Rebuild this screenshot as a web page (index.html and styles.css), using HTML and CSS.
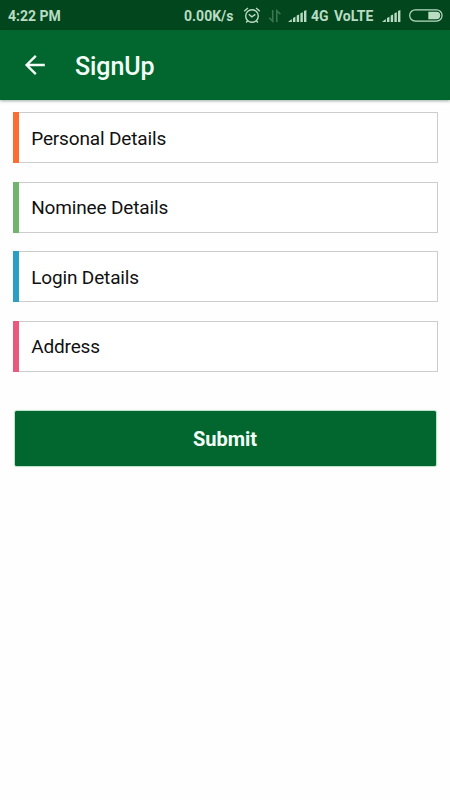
FILE: index.html
```html
<!DOCTYPE html>
<html lang="en">
<head>
<meta charset="utf-8">
<title>SignUp</title>
<link rel="stylesheet" href="styles.css">
</head>
<body>
<div class="status">
  <span class="time">4:22 PM</span>
  <span class="speed">0.00K/s</span>
  <svg class="alarm" width="18" height="18" viewBox="0 0 18 18" fill="none" stroke="currentColor" stroke-width="1.4"><circle cx="9" cy="9" r="6.3"/><path d="M1.2 4.2 4.9 1M16.8 4.2 13.1 1M5.8 7.2 8.8 9.8 12.4 7.4M4.6 13.7 3.2 15.5M13.4 13.7 14.8 15.5"/></svg>
  <svg class="data" width="14" height="14" viewBox="0 0 14 14" fill="none" stroke="currentColor" stroke-width="1.6"><path d="M4.7 1V12.3L1.2 8.7M8.8 13V1.7L12.4 5.3"/></svg>
  <svg class="signal" width="19" height="14" viewBox="0 0 19 14" fill="currentColor"><path d="M0 13 3.8 10V13ZM5 8.9 7.4 7.8V13H5ZM8.7 6.6 11.1 5.5V13H8.7ZM12.4 4.3 14.8 3.2V13H12.4ZM16 2 18.4 1V13H16Z"/></svg>
  <span class="network">4G</span>
  <span class="volte">VoLTE</span>
  <svg class="signal second" width="19" height="14" viewBox="0 0 19 14" fill="currentColor"><path d="M0 13 3.8 10V13ZM5 8.9 7.4 7.8V13H5ZM8.7 6.6 11.1 5.5V13H8.7ZM12.4 4.3 14.8 3.2V13H12.4ZM16 2 18.4 1V13H16Z"/></svg>
  <svg class="battery" width="34" height="13" viewBox="0 0 34 13"><rect x=".7" y=".9" width="32.4" height="11.2" rx="5.6" fill="none" stroke="currentColor" stroke-width="1.2"/><path d="M19.3 2.8H27.5A3.7 3.7 0 0 1 27.5 10.2H19.3Z" fill="currentColor"/></svg>
</div>
<header class="appbar">
  <svg class="back" width="22" height="22" viewBox="0 0 22 22" fill="none" stroke="currentColor" stroke-width="2.4"><path d="M20.8 11H3M11.8 1.8 2.6 11 11.8 20.2"/></svg>
  <h1 class="title">SignUp</h1>
</header>
<main class="content">
  <div class="card personal">Personal Details</div>
  <div class="card nominee">Nominee Details</div>
  <div class="card login">Login Details</div>
  <div class="card address">Address</div>
  <button class="submit">Submit</button>
</main>
</body>
</html>
```

FILE: styles.css
```css
* { box-sizing: border-box; }
body {
  margin: 0;
  height: 800px;
  background: #fefefe;
  font-family: Roboto, sans-serif;
  overflow: hidden;
}
svg { display: block; flex: none; }
.status {
  height: 30px;
  padding: 1px 7px 0 8px;
  display: flex;
  align-items: center;
  background: #01461d;
  color: #b9dcc2;
  font-size: 14px;
  font-weight: 700;
  white-space: nowrap;
}
.time { width: 176px; }
.speed { width: 59px; }
.alarm { margin-right: 7px; }
.data { margin-right: 6px; color: #3c7650; }
.network { width: 23px; margin-left: 4px; }
.volte { width: 48px; }
.battery { margin-left: 8px; }
.appbar {
  position: relative;
  height: 70px;
  padding-left: 24px;
  display: flex;
  align-items: center;
  background: #01672f;
  color: #f4fff8;
  box-shadow: 0 1px 3px rgba(0, 50, 20, .4);
}
.title {
  margin: 4px 0 0 29px;
  font-size: 25px;
  line-height: 30px;
  font-weight: 500;
  letter-spacing: -.1px;
}
.content {
  padding: 12.4px 12px 0 12.5px;
  display: flex;
  flex-direction: column;
}
.card {
  height: 51px;
  margin-bottom: 18.4px;
  padding: 1px 0 0 12px;
  display: flex;
  align-items: center;
  background: #fff;
  border: 1px solid #ccc;
  border-left-width: 0;
  border-radius: 1px;
  font-size: 19px;
  letter-spacing: -.15px;
  color: #111;
}
.card::before {
  content: "";
  width: 6.4px;
  height: 51px;
  margin: -1px 12.3px 0 -12px;
  background: var(--accent);
}
.personal { --accent: #fb6d31; }
.nominee { --accent: #70b56e; }
.login { --accent: #299fc3; }
.address { --accent: #ea587d; }
.submit {
  height: 55px;
  margin: 21px 2.5px 0 2px;
  padding: 2px 0 0;
  border: 0;
  border-radius: 1.5px;
  background: #01672f;
  box-shadow: 0 0 1px 1px #b8dfc5;
  color: #f4fff8;
  font: 700 20px Roboto, sans-serif;
}
```
